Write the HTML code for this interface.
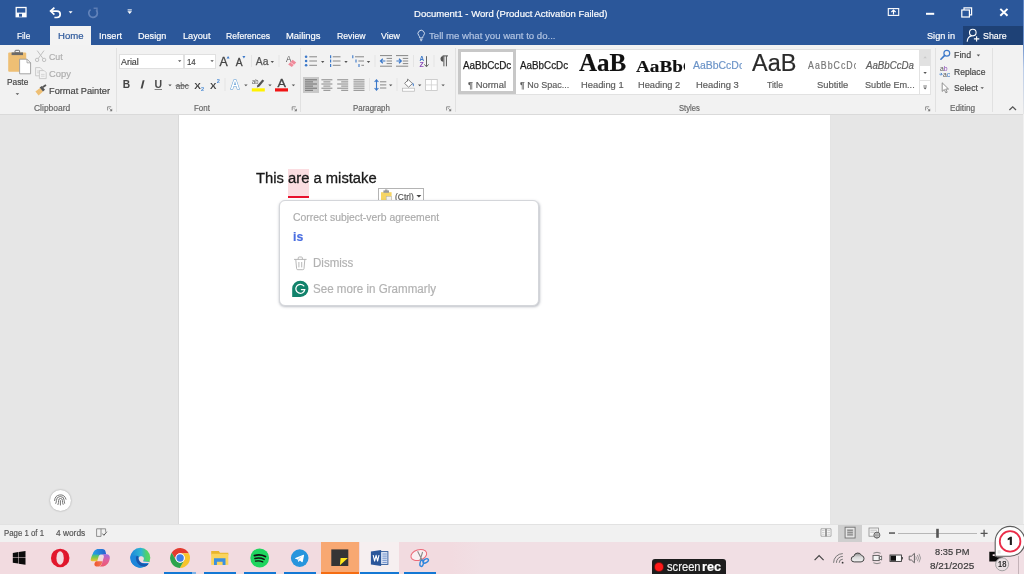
<!DOCTYPE html>
<html><head><meta charset="utf-8"><title>Document1 - Word</title>
<style>
html,body{margin:0;padding:0;}
body{width:1024px;height:574px;overflow:hidden;position:relative;background:#e6e6e6;font-family:'Liberation Sans', sans-serif;}
.b{position:absolute;}
.t{position:absolute;-webkit-text-stroke-width:0.18px;line-height:0;white-space:pre;transform-origin:0 0;font-family:'Liberation Sans', sans-serif;}
svg{position:absolute;overflow:visible;}
#root{position:absolute;left:0;top:0;width:1024px;height:574px;overflow:hidden;will-change:transform;}

</style></head><body><div id="root">
<!-- title bar + tab row -->
<div class="b" style="left:0;top:0;width:1024px;height:45px;background:#2b579a"></div>
<div class="b" style="left:50px;top:26px;width:40.5px;height:19px;background:#f3f3f3"></div>
<div class="b" style="left:963px;top:26px;width:61px;height:19px;background:#1e4176"></div>
<!-- ribbon -->
<div class="b" style="left:0;top:45px;width:1024px;height:69.4px;background:#f2f2f2"></div>
<div class="b" style="left:0;top:114px;width:1024px;height:1px;background:#dadada"></div>
<!-- page -->
<div class="b" style="left:178.1px;top:115.2px;width:652.8px;height:409px;background:#d9d9d9"></div>
<div class="b" style="left:179px;top:115.2px;width:650.6px;height:409px;background:#fff;box-shadow:0.5px 0 0 #f0f0f0"></div>
<!-- status bar -->
<div class="b" style="left:0;top:524px;width:1024px;height:18px;background:#f1f1f1"></div>
<!-- taskbar -->
<div class="b" style="left:0;top:542px;width:1024px;height:32px;background:linear-gradient(90deg,#f2dbe0 0,#f2dbe0 44%,#f1dfe4 47%,#f1dfe4 100%)"></div>

<!-- title bar icons -->
<svg style="left:0;top:0" width="1024" height="46" viewBox="0 0 1024 46">
 <!-- save -->
 <g fill="none" stroke="#fff" stroke-width="1.3">
  <rect x="16.2" y="7.5" width="9.8" height="9.2"/>
 </g>
 <rect x="16.2" y="12.6" width="9.8" height="4.1" fill="#fff"/>
 <rect x="19" y="13.8" width="3" height="2.9" fill="#2b579a"/>
 <!-- undo -->
 <path d="M51.3 11.1 H57 A3.2 3.2 0 0 1 57 17.5 H54.4" fill="none" stroke="#fff" stroke-width="1.7" stroke-linecap="butt"/>
 <path d="M54.4 7.6 L50.6 11.1 L54.4 14.6" fill="none" stroke="#fff" stroke-width="1.7"/>
 <path d="M68.6 11.2 h4 l-2 2.2z" fill="#fff"/>
 <!-- redo dim -->
 <path d="M96.2 10.2 A4.3 4.3 0 1 1 90.6 9.6" fill="none" stroke="#6283ba" stroke-width="1.7"/>
 <path d="M93.6 8.2 h3.4 v3.4" fill="none" stroke="#5b7cb4" stroke-width="1.4"/>
 <!-- qat -->
 <rect x="127.6" y="9.4" width="4.2" height="1" fill="#fff"/>
 <path d="M127.4 11.3 h4.6 l-2.3 2.6z" fill="#fff"/>
 <!-- ribbon display -->
 <rect x="888.3" y="8.6" width="10.4" height="6.8" fill="none" stroke="#fff" stroke-width="1.1"/>
 <path d="M893.5 14.4 v-3.6 M891.3 12.2 l2.2 -2.2 l2.2 2.2" fill="none" stroke="#fff" stroke-width="1.2"/>
 <!-- minimize -->
 <rect x="926" y="12.8" width="8.2" height="2" fill="#fff"/>
 <!-- restore -->
 <rect x="961.8" y="10" width="7.6" height="7" fill="none" stroke="#fff" stroke-width="1.2"/>
 <path d="M964 10 v-2.2 h7.6 v7 h-2.2" fill="none" stroke="#fff" stroke-width="1.2"/>
 <!-- close -->
 <path d="M1000.3 8.9 l7.2 6.9 M1007.5 8.9 l-7.2 6.9" stroke="#fff" stroke-width="2" fill="none"/>
 <!-- share person -->
 <circle cx="972.8" cy="32.6" r="3.3" fill="none" stroke="#fff" stroke-width="1.1"/>
 <path d="M967.2 41.8 c0.2 -3.4 2 -5.6 4.6 -5.9" fill="none" stroke="#fff" stroke-width="1.1"/>
 <path d="M976.6 36.2 v5.4 M973.9 38.9 h5.4" fill="none" stroke="#fff" stroke-width="1.1"/>
 <!-- lightbulb -->
 <path d="M418.800 35.600 a3.200 3.200 0 1 1 4.800 0 c-0.700 0.800 -0.900 1.300 -0.900 2.300 h-3 c0 -1 -0.200 -1.500 -0.900 -2.300z" fill="none" stroke="#d6e0f1" stroke-width="0.950"/>
 <path d="M419.900 39.300 h2.600 M420.300 40.700 h1.800" stroke="#d6e0f1" stroke-width="0.950"/>
</svg>

<!-- clipboard group icons -->
<svg style="left:0;top:44px" width="120" height="72" viewBox="0 44 120 72">
 <!-- paste: board -->
 <rect x="8.2" y="52.6" width="18" height="19.2" rx="1" fill="#eebf74"/>
 <rect x="11.600" y="52.400" width="11.400" height="2.700" fill="#6a6a6a"/>
 <rect x="15" y="50.300" width="4.600" height="2.600" rx="0.800" fill="none" stroke="#6a6a6a" stroke-width="1"/>
 <!-- paper -->
 <path d="M19.6 59.2 h7.4 l3.6 3.6 v11 h-11z" fill="#fff" stroke="#9a9a9a" stroke-width="0.9"/>
 <path d="M27 59.2 v3.6 h3.6" fill="none" stroke="#9a9a9a" stroke-width="0.8"/>
 <path d="M15.6 93.2 h3.6 l-1.8 1.9z" fill="#555"/>
 <!-- cut (disabled) -->
 <g fill="none" stroke="#c0c0c0" stroke-width="1">
  <path d="M37.2 50.6 l6 8.2 M44 50.6 l-6 8.2"/>
  <circle cx="37.1" cy="59.9" r="1.7"/><circle cx="44.1" cy="59.9" r="1.7"/>
 </g>
 <!-- copy (disabled) -->
 <g fill="#f3f3f3" stroke="#c4c4c4" stroke-width="0.85">
  <path d="M35.6 67.6 h4.6 l2 2 v6.2 h-6.6z"/>
  <path d="M39.4 70.6 h4.8 l2 2 v6 h-6.8z"/>
 </g>
 <path d="M37 71 h3 M37 72.8 h2 M41 74.4 h3.6 M41 76.2 h3.6" stroke="#c8c8c8" stroke-width="0.7"/>
 <!-- format painter -->
 <path d="M35.4 91.4 l4.6 -3.4 l3 3.6 l-4.4 3.8z" fill="#eebf74"/>
 <path d="M39.6 87.6 l2.2 -1.6 l3.2 3.8 l-2 1.8z" fill="#555"/>
 <path d="M42.6 87.2 l3.4 -2.2" stroke="#555" stroke-width="1.8"/>
 <!-- launcher -->
 <path d="M107.6 110.4 v-3.6 h3.6" fill="none" stroke="#777" stroke-width="0.8"/>
 <path d="M112.2 108.6 v2.6 h-2.6z" fill="#777"/>
 <path d="M109.2 108.2 l2 2" stroke="#777" stroke-width="0.7"/>
</svg>

<!-- group separators -->
<div class="b" style="left:116px;top:48px;width:1px;height:64px;background:#e1e1e1"></div>
<div class="b" style="left:300px;top:48px;width:1px;height:64px;background:#e1e1e1"></div>
<div class="b" style="left:454.5px;top:48px;width:1px;height:64px;background:#e1e1e1"></div>
<div class="b" style="left:934.5px;top:48px;width:1px;height:64px;background:#e1e1e1"></div>
<div class="b" style="left:991.5px;top:48px;width:1px;height:64px;background:#e1e1e1"></div>
<!-- font name / size boxes -->
<div class="b" style="left:119px;top:53.5px;width:65px;height:15.5px;background:#fff;border:1px solid #e0e0e0;box-sizing:border-box"></div>
<div class="b" style="left:184px;top:53.5px;width:32.3px;height:15.5px;background:#fff;border:1px solid #e0e0e0;box-sizing:border-box"></div>
<svg style="left:114px;top:46px" width="190" height="70" viewBox="114 46 190 70" font-family="'Liberation Sans', sans-serif">
 <path d="M178 60.2 h3.4 l-1.7 1.9z M210.4 60.2 h3.4 l-1.7 1.9z" fill="#555"/>
 <!-- grow / shrink -->
 <text x="219.600" y="66.100" font-size="12" fill="#444" stroke="#444" stroke-width="0.300" textLength="8.200" lengthAdjust="spacingAndGlyphs">A</text>
 <path d="M226.6 58.4 l1.5 -2.4 l1.5 2.4z" fill="#3b78c9"/>
 <text x="235.800" y="66.100" font-size="10" fill="#444" stroke="#444" stroke-width="0.300" textLength="6.800" lengthAdjust="spacingAndGlyphs">A</text>
 <path d="M242.4 56.1 h3 l-1.5 2.4z" fill="#3b78c9"/>
 <rect x="251" y="55" width="1" height="12" fill="#e4e4e4"/>
 <!-- Aa -->
 <text x="255.800" y="64.700" font-size="10" fill="#555" stroke="#555" stroke-width="0.250" textLength="12.600" lengthAdjust="spacingAndGlyphs">Aa</text>
 <path d="M270.6 61 h3.4 l-1.7 1.9z" fill="#555"/>
 <rect x="278.5" y="55" width="1" height="12" fill="#e4e4e4"/>
 <!-- clear formatting -->
 <text x="286" y="62.4" font-size="8.5" fill="#555" textLength="5.4" lengthAdjust="spacingAndGlyphs">A</text>
 <path d="M292.6 59.8 l3.6 2.6 l-4.4 4.6 l-3.6 -2.6z" fill="#f08a9a"/>
 <path d="M290.4 62.2 l3.6 2.6" stroke="#fbd3d9" stroke-width="0.8"/>
 <!-- B I U -->
 <text x="122.7" y="88.4" font-size="10.8" font-weight="700" fill="#444" textLength="7.4" lengthAdjust="spacingAndGlyphs">B</text>
 <path d="M140.600 88.400 L142.700 80.300 h1.900 L142.500 88.400z" fill="#444"/>
 <text x="154.500" y="88.400" font-size="10.800" font-weight="700" fill="#4a4a4a" textLength="7.600" lengthAdjust="spacingAndGlyphs">U</text>
 <rect x="154.600" y="89.200" width="7.400" height="0.800" fill="#666"/>
 <path d="M168.3 84.4 h3.4 l-1.7 1.9z" fill="#555"/>
 <!-- abc strike -->
 <text x="175.8" y="88.6" font-size="9" fill="#555" textLength="13" lengthAdjust="spacingAndGlyphs">abc</text>
 <rect x="175.4" y="85.4" width="13.8" height="0.8" fill="#555"/>
 <!-- X2 sub / sup -->
 <text x="194.2" y="89" font-size="9.6" font-weight="700" fill="#444" textLength="6.6" lengthAdjust="spacingAndGlyphs">X</text>
 <text x="201" y="91" font-size="5.600" font-weight="700" fill="#4a8ad4">2</text>
 <text x="210.1" y="89" font-size="9.6" font-weight="700" fill="#444" textLength="6.4" lengthAdjust="spacingAndGlyphs">X</text>
 <text x="216.700" y="82.900" font-size="5.600" font-weight="700" fill="#4a8ad4">2</text>
 <rect x="224.5" y="78" width="1" height="13" fill="#e4e4e4"/>
 <!-- text effects A -->
 <text x="230.6" y="89.2" font-size="12.5" font-weight="700" fill="#fff" stroke="#5b9bd5" stroke-width="1" textLength="9" lengthAdjust="spacingAndGlyphs" paint-order="stroke">A</text>
 <path d="M244.2 84.4 h3.4 l-1.7 1.9z" fill="#555"/>
 <!-- highlighter -->
 <text x="252" y="83.6" font-size="6.5" fill="#555" textLength="6.4" lengthAdjust="spacingAndGlyphs">ab</text>
 <path d="M262.4 79.4 l1.8 1.4 l-5 6 l-2.4 0.8 l0.6 -2.4z" fill="#555"/>
 <rect x="251.8" y="88.3" width="13" height="3.2" fill="#fff200"/>
 <path d="M268.3 84.4 h3.4 l-1.7 1.9z" fill="#555"/>
 <!-- font color -->
 <text x="277.500" y="87.300" font-size="11" fill="#444" stroke="#444" stroke-width="0.300" textLength="8.400" lengthAdjust="spacingAndGlyphs">A</text>
 <rect x="275" y="88.3" width="13" height="3.2" fill="#f01414"/>
 <path d="M291.7 84.4 h3.4 l-1.7 1.9z" fill="#555"/>
 <!-- launcher -->
 <path d="M292.2 110.4 v-3.6 h3.6" fill="none" stroke="#777" stroke-width="0.8"/>
 <path d="M296.8 108.6 v2.6 h-2.6z" fill="#777"/>
 <path d="M293.8 108.2 l2 2" stroke="#777" stroke-width="0.7"/>
</svg>

<!-- paragraph group -->
<div class="b" style="left:303.2px;top:77.2px;width:15.6px;height:15.7px;background:#c8c8c8"></div>
<svg style="left:298px;top:46px" width="160" height="70" viewBox="298 46 160 70" font-family="'Liberation Sans', sans-serif">
 <!-- bullets -->
 <g fill="#3b78c9"><circle cx="306.1" cy="56.8" r="1.3"/><circle cx="306.1" cy="61" r="1.3"/><circle cx="306.1" cy="65.3" r="1.3"/></g>
 <path d="M309.3 56.8 h7.7 M309.3 61 h7.7 M309.3 65.3 h7.7" stroke="#7a7a7a" stroke-width="0.9"/>
 <path d="M321 61 h3.4 l-1.7 1.9z" fill="#555"/>
 <!-- numbering -->
 <path d="M330.6 55.2 v3 M330.6 59.6 v3 M330.6 64 v3" stroke="#3b78c9" stroke-width="1.2"/>
 <path d="M332.8 56.8 h7.7 M332.8 61 h7.7 M332.8 65.3 h7.7" stroke="#7a7a7a" stroke-width="0.9"/>
 <path d="M344.3 61 h3.4 l-1.7 1.9z" fill="#555"/>
 <!-- multilevel -->
 <path d="M352.8 55.2 v3 M356 59.6 v3 M359 64 v3" stroke="#3b78c9" stroke-width="1.1"/>
 <path d="M355 56.8 h9 M358.4 61 h5.6 M361.4 65.3 h2.6" stroke="#7a7a7a" stroke-width="0.9"/>
 <path d="M366.8 61 h3.4 l-1.7 1.9z" fill="#555"/>
 <rect x="374.5" y="55" width="1" height="12" fill="#e4e4e4"/>
 <!-- decrease indent -->
 <path d="M380 55.6 h12 M386.6 58.4 h5.4 M386.6 61 h5.4 M386.6 63.6 h5.4 M380 66.2 h12" stroke="#7a7a7a" stroke-width="0.9"/>
 <path d="M385.4 61 h-4.6 M382.8 58.8 l-2.3 2.2 l2.3 2.2" stroke="#3b78c9" stroke-width="1.2" fill="none"/>
 <!-- increase indent -->
 <path d="M396 55.6 h12.2 M402.8 58.4 h5.4 M402.8 61 h5.4 M402.8 63.6 h5.4 M396 66.2 h12.2" stroke="#7a7a7a" stroke-width="0.9"/>
 <path d="M396.4 61 h4.8 M399 58.8 l2.3 2.2 l-2.3 2.2" stroke="#3b78c9" stroke-width="1.2" fill="none"/>
 <rect x="413" y="55" width="1" height="12" fill="#e4e4e4"/>
 <!-- sort -->
 <text x="419.4" y="60.9" font-size="7" font-weight="700" fill="#3b78c9" textLength="4.6" lengthAdjust="spacingAndGlyphs">A</text>
 <text x="419.6" y="66.9" font-size="7" font-weight="700" fill="#8a4bb8" textLength="4.2" lengthAdjust="spacingAndGlyphs">Z</text>
 <path d="M426.5 56.2 v10 M424.4 64.4 l2.1 2.4 l2.1 -2.4" stroke="#555" stroke-width="0.9" fill="none"/>
 <rect x="433.5" y="55" width="1" height="12" fill="#e4e4e4"/>
 <!-- pilcrow -->
 <path d="M443.4 55.9 a2.9 2.9 0 0 0 0 5.8 z" fill="#555"/>
 <path d="M443.9 55.9 v10.4 M446.4 55.9 v10.4 M442.6 55.9 h5.4" stroke="#555" stroke-width="1" fill="none"/>
 <!-- align left (selected) -->
 <path d="M305 79.8 h12 M305 81.9 h8 M305 84 h12 M305 86.1 h8 M305 88.2 h12 M305 90.3 h8" stroke="#666" stroke-width="0.9"/>
 <!-- center -->
 <path d="M321.4 79.8 h11 M323.4 81.9 h7 M321.4 84 h11 M323.4 86.1 h7 M321.4 88.2 h11 M323.4 90.3 h7" stroke="#7a7a7a" stroke-width="0.9"/>
 <!-- right -->
 <path d="M337.2 79.8 h11 M341.2 81.9 h7 M337.2 84 h11 M341.2 86.1 h7 M337.2 88.2 h11 M341.2 90.3 h7" stroke="#7a7a7a" stroke-width="0.9"/>
 <!-- justify -->
 <path d="M353.5 79.8 h11 M353.5 81.9 h11 M353.5 84 h11 M353.5 86.1 h11 M353.5 88.2 h11 M353.5 90.3 h11" stroke="#7a7a7a" stroke-width="0.9"/>
 <rect x="369" y="78" width="1" height="13" fill="#e4e4e4"/>
 <!-- line spacing -->
 <path d="M376.5 80 v10 M374.6 82 l1.9 -2.2 l1.9 2.2 M374.6 88 l1.9 2.2 l1.9 -2.2" stroke="#3b78c9" stroke-width="1.1" fill="none"/>
 <path d="M380 81.8 h6.3 M380 84.9 h6.3 M380 88 h6.3" stroke="#7a7a7a" stroke-width="0.9"/>
 <path d="M389 84.4 h3.4 l-1.7 1.9z" fill="#555"/>
 <rect x="396.5" y="78" width="1" height="13" fill="#e4e4e4"/>
 <!-- shading -->
 <path d="M404.6 83.4 l3.8 -3.8 l4 4 l-3.8 3.6z" fill="#fff" stroke="#666" stroke-width="0.8"/>
 <path d="M407.6 81.4 v-2.6" stroke="#666" stroke-width="0.8"/>
 <path d="M412.6 82.6 c1.4 1.2 1.6 2.6 1 3.8 c-0.8 -0.4 -1.2 -1.6 -1 -3.8z" fill="#3b78c9"/>
 <rect x="402.4" y="88.2" width="12.2" height="3" fill="#fff" stroke="#b5b5b5" stroke-width="0.7"/>
 <path d="M418 84.4 h3.4 l-1.7 1.9z" fill="#555"/>
 <!-- borders -->
 <rect x="425.6" y="79.4" width="11.6" height="11" fill="#fff" stroke="#c4c4c4" stroke-width="0.8"/>
 <path d="M431.4 79.4 v11 M425.6 84.9 h11.6" stroke="#cfcfcf" stroke-width="0.8"/>
 <path d="M441.4 84.4 h3.4 l-1.7 1.9z" fill="#555"/>
 <!-- launcher -->
 <path d="M446.6 110.4 v-3.6 h3.6" fill="none" stroke="#777" stroke-width="0.8"/>
 <path d="M451.2 108.6 v2.6 h-2.6z" fill="#777"/>
 <path d="M448.2 108.2 l2 2" stroke="#777" stroke-width="0.7"/>
</svg>

<!-- styles gallery -->
<div class="b" style="left:458px;top:49px;width:472.5px;height:46px;background:#fff;border:1px solid #e2e2e2;box-sizing:border-box"></div>
<div class="b" style="left:458px;top:48.500px;width:58px;height:45.600px;border:3px solid #c8c8c8;box-sizing:border-box;background:#fff"></div>
<!-- gallery scroll column -->
<div class="b" style="left:919px;top:49.5px;width:11.2px;height:15.4px;background:#e1e1e1"></div>
<div class="b" style="left:919px;top:49.5px;width:1px;height:45.5px;background:#e2e2e2"></div>
<div class="b" style="left:919px;top:64.9px;width:11.2px;height:1px;background:#e2e2e2"></div>
<div class="b" style="left:919px;top:80px;width:11.2px;height:1px;background:#e2e2e2"></div>
<svg style="left:916px;top:46px" width="20" height="70" viewBox="916 46 20 70">
 <path d="M923.4 58.2 h3.4 l-1.7 -1.9z" fill="#c9c9c9"/>
 <path d="M923.4 72 h3.4 l-1.7 1.9z" fill="#555"/>
 <path d="M923.3 86 h3.6" stroke="#555" stroke-width="0.8"/>
 <path d="M923.4 87.6 h3.4 l-1.7 1.9z" fill="#555"/>
 <path d="M925.6 110.4 v-3.6 h3.6" fill="none" stroke="#777" stroke-width="0.8"/>
 <path d="M930.2 108.6 v2.6 h-2.6z" fill="#777"/>
 <path d="M927.2 108.2 l2 2" stroke="#777" stroke-width="0.7"/>
</svg>

<!-- editing group -->
<svg style="left:934px;top:46px" width="90" height="70" viewBox="934 46 90 70" font-family="'Liberation Sans', sans-serif">
 <circle cx="946.8" cy="53.2" r="2.9" fill="none" stroke="#3b78c9" stroke-width="1.2"/>
 <path d="M944.7 55.4 l-3.8 3.8" stroke="#3b78c9" stroke-width="1.6" stroke-linecap="round"/>
 <path d="M976.7 54.6 h3.4 l-1.7 1.9z" fill="#555"/>
 <!-- replace -->
 <text x="940" y="71" font-size="6.8" fill="#555">a</text>
 <text x="943.8" y="71" font-size="6.8" fill="#8a4bb8">b</text>
 <text x="943" y="77" font-size="6.8" fill="#555">a</text>
 <text x="946.8" y="77" font-size="6.8" fill="#3b78c9">c</text>
 <path d="M939.4 74.2 h2.6 M940.9 72.9 l1.3 1.3 l-1.3 1.3" stroke="#3b78c9" stroke-width="0.8" fill="none"/>
 <!-- select cursor -->
 <path d="M942.2 82.8 v8.6 l2.1 -1.9 l1.5 3.3 l1.4 -0.6 l-1.5 -3.2 h2.8z" fill="#fff" stroke="#777" stroke-width="0.8" stroke-linejoin="round"/>
 <path d="M980.5 87.2 h3.4 l-1.7 1.9z" fill="#555"/>
 <!-- collapse chevron -->
 <path d="M1009.4 110 l3.3 -3.1 l3.3 3.1" fill="none" stroke="#555" stroke-width="1.3"/>
</svg>
<!-- right edge sliver -->
<div class="b" style="left:1022.5px;top:0;width:1.5px;height:114px;background:linear-gradient(#5f86c4 0,#6f93cc 40%,#b9cbe8 60%,#e6e6e6 100%)"></div>
<div class="b" style="left:1022.5px;top:114px;width:1.5px;height:428px;background:#f0f0f0"></div>

<!-- document content -->
<div class="b" style="left:287.8px;top:169.4px;width:21px;height:26.8px;background:#fbdde1"></div>
<div class="b" style="left:287.8px;top:195.9px;width:21px;height:2.1px;background:#e8112d"></div>
<!-- paste options (Ctrl) button -->
<div class="b" style="left:378.2px;top:188.1px;width:45.8px;height:14px;background:#fff;border:1px solid #b4b4b4;box-sizing:border-box"></div>
<svg style="left:378px;top:188px" width="48" height="14" viewBox="378 188 48 14">
 <rect x="381" y="192.200" width="10.600" height="9" fill="#f6d565"/>
 <rect x="383.400" y="190.400" width="5.600" height="2.400" fill="#9a9a9a"/>
 <rect x="385" y="189.500" width="2.400" height="1.300" fill="#9a9a9a"/>
 <rect x="386.200" y="196.400" width="5.200" height="5" fill="#f2f2f2" stroke="#b0b0b0" stroke-width="0.500"/>
 <path d="M416.4 195.1 h5 l-2.5 2.5z" fill="#444"/>
</svg>
<!-- grammarly popup -->
<div class="b" style="left:278.7px;top:199.5px;width:260px;height:106.6px;background:#fff;border:1px solid #d4d6da;border-radius:6px;box-sizing:border-box;box-shadow:0.5px 1px 2.5px rgba(60,70,90,0.35)"></div>
<svg style="left:290px;top:252px" width="24" height="50" viewBox="290 252 24 50">
 <!-- trash -->
 <g fill="none" stroke="#b4b4b4" stroke-width="0.95" stroke-linecap="round" stroke-linejoin="round">
  <path d="M294.4 259.4 h11.8"/>
  <path d="M298.2 259.2 v-1.2 a1 1 0 0 1 1 -1 h2.2 a1 1 0 0 1 1 1 v1.2"/>
  <path d="M295.8 259.6 l0.8 9 a1.2 1.2 0 0 0 1.2 1.1 h5 a1.2 1.2 0 0 0 1.2 -1.1 l0.8 -9"/>
  <path d="M298.9 262.4 v4.6 M301.7 262.4 v4.6"/>
 </g>
 <!-- grammarly G -->
 <path d="M300.300 280.700 a8.100 8.100 0 1 1 0 16.200 h-8.100 v-8.100 a8.100 8.100 0 0 1 8.100 -8.100z" fill="#11826b"/>
 <path d="M303.800 285.900 a4.500 4.500 0 1 0 1 3.600 h-3.400" fill="none" stroke="#fff" stroke-width="1.250" stroke-linecap="round"/>
</svg>

<!-- fingerprint floating button -->
<div class="b" style="left:49.6px;top:489.8px;width:21.4px;height:21.4px;border-radius:50%;background:#fff;box-shadow:0 0 2px rgba(0,0,0,0.35)"></div>
<svg style="left:50px;top:490px" width="22" height="22" viewBox="50 490 22 22">
 <g fill="none" stroke="#777" stroke-width="1" stroke-linecap="round">
  <path d="M54.6 500.6 a5.8 5.8 0 0 1 11.4 -1.4"/>
  <path d="M55.8 503.4 c0.5 -1 0.6 -2 0.6 -3 a3.9 3.9 0 0 1 7.8 0 c0 1 0.1 2 0.4 2.9"/>
  <path d="M58 504.6 c0.5 -1.4 0.6 -2.8 0.6 -4.2 a1.9 1.9 0 0 1 3.8 0 c0 1.6 0.2 3 0.7 4"/>
  <path d="M60.4 500.6 v4.4"/>
 </g>
</svg>
<!-- status bar icons -->
<div class="b" style="left:0;top:524px;width:1024px;height:1px;background:#e2e2e2"></div>
<div class="b" style="left:838.3px;top:525px;width:23.7px;height:17px;background:#cfcfcf"></div>
<svg style="left:0;top:524px" width="1024" height="18" viewBox="0 524 1024 18">
 <!-- proofing book -->
 <path d="M96.6 528.8 h4.4 v7.6 h-4.4z M101 528.8 h4.6 v3" fill="none" stroke="#777" stroke-width="0.8"/>
 <path d="M102.4 533.6 l1.5 1.7 l2.9 -3.6" fill="none" stroke="#555" stroke-width="1"/>
 <!-- read mode -->
 <path d="M821 528.8 h4.6 v7.4 h-4.6z M826.4 528.8 h4.6 v7.4 h-4.6z" fill="#fff" stroke="#8a8a8a" stroke-width="0.7"/>
 <path d="M822 530.6 h2.6 M822 532.4 h2.6 M822 534.2 h2.6 M827.4 530.6 h2.6 M827.4 532.4 h2.6 M827.4 534.2 h2.6" stroke="#aaa" stroke-width="0.6"/>
 <path d="M826 528.4 v8.6" stroke="#777" stroke-width="0.7"/>
 <!-- print layout -->
 <rect x="845.100" y="527.200" width="10" height="10.800" fill="#e9e9e9" stroke="#6f6f6f" stroke-width="0.900"/>
 <rect x="846.900" y="529" width="6.400" height="7.200" fill="#bdbdbd"/>
 <path d="M847.400 530.400 h5.400 M847.400 532.600 h5.400 M847.400 534.800 h5.400" stroke="#7d7d7d" stroke-width="0.800"/>
 <!-- web layout -->
 <rect x="869" y="528" width="9.600" height="8.200" fill="#f6f6f6" stroke="#888" stroke-width="0.800"/>
 <path d="M870.400 530.200 h6.600 M870.400 532.200 h4" stroke="#aaa" stroke-width="0.700"/>
 <circle cx="876.900" cy="535.100" r="3" fill="#f1f1f1" stroke="#555" stroke-width="0.900"/>
 <path d="M873.900 535.100 h6 M876.900 532.100 v6" stroke="#666" stroke-width="0.500"/>
 <ellipse cx="876.900" cy="535.100" rx="1.300" ry="3" fill="none" stroke="#666" stroke-width="0.500"/>
 <!-- zoom slider -->
 <rect x="889" y="532.300" width="6" height="1.500" fill="#555"/>
 <rect x="898" y="533" width="79" height="0.8" fill="#a9a9a9"/>
 <rect x="936.2" y="528.8" width="2.6" height="9" fill="#555"/>
 <path d="M980.6 533.3 h7 M984.1 529.8 v7" stroke="#555" stroke-width="1.3"/>
</svg>

<!-- taskbar highlights + running indicators -->
<div class="b" style="left:320.6px;top:542px;width:38.7px;height:32px;background:#f8a872"></div>
<div class="b" style="left:320.6px;top:572px;width:38.7px;height:2px;background:#f56d12"></div>
<div class="b" style="left:360.4px;top:542px;width:38.8px;height:32px;background:#f6eff0"></div>
<div class="b" style="left:360.4px;top:572px;width:38.8px;height:2px;background:#1478d4"></div>
<div class="b" style="left:164px;top:572px;width:28px;height:2px;background:#1478d4"></div>
<div class="b" style="left:192px;top:572px;width:4.3px;height:2px;background:#7fb2e6"></div>
<div class="b" style="left:204px;top:572px;width:32.3px;height:2px;background:#1478d4"></div>
<div class="b" style="left:244px;top:572px;width:32.4px;height:2px;background:#1478d4"></div>
<div class="b" style="left:283.8px;top:572px;width:32.4px;height:2px;background:#1478d4"></div>
<div class="b" style="left:403.9px;top:572px;width:32.3px;height:2px;background:#1478d4"></div>
<svg style="left:0;top:542px" width="470" height="32" viewBox="0 542 470 32">
 <!-- windows -->
 <path d="M12.800 552.900 l5.400 -0.800 v5.500 h-5.400z M18.700 552 l6.800 -1 v6.600 h-6.800z M12.800 558.100 h5.400 v5.500 l-5.400 -0.800z M18.700 558.100 h6.800 v6.600 l-6.800 -1z" fill="#0c0c0c"/>
 <!-- opera -->
 <circle cx="60.200" cy="557.900" r="9.250" fill="#e2182d"/>
 <path d="M62.500 550 a8.600 8.600 0 0 1 0 15.800 a9 9 0 0 0 0 -15.800z" fill="#b50f22" opacity="0.500"/>
 <ellipse cx="60.100" cy="558" rx="3.700" ry="6.700" fill="#f2dbe0"/>
 <!-- copilot -->
 <defs>
  <linearGradient id="cpB" x1="0" y1="0" x2="1" y2="0"><stop offset="0" stop-color="#27a4e6"/><stop offset="1" stop-color="#2560cf"/></linearGradient>
  <linearGradient id="cpL" x1="0" y1="0" x2="0" y2="1"><stop offset="0" stop-color="#35b8a0"/><stop offset="0.45" stop-color="#7fc84a"/><stop offset="1" stop-color="#f2c22e"/></linearGradient>
  <linearGradient id="cpR" x1="0" y1="0" x2="0" y2="1"><stop offset="0" stop-color="#a06be0"/><stop offset="0.5" stop-color="#e0609a"/><stop offset="1" stop-color="#f0566a"/></linearGradient>
  <linearGradient id="cpO" x1="0" y1="0" x2="1" y2="0"><stop offset="0" stop-color="#f0542c"/><stop offset="1" stop-color="#f07a5a"/></linearGradient>
  <linearGradient id="edT" x1="0" y1="0" x2="1" y2="0"><stop offset="0" stop-color="#1e86da"/><stop offset="0.55" stop-color="#2fb6d2"/><stop offset="0.8" stop-color="#4fd06c"/><stop offset="1" stop-color="#56d764"/></linearGradient>
 </defs>
 <path d="M92.6 554.6 c0.800 -3.200 2.600 -5.600 5.800 -5.600 h3.800 c2 0 3 1 3.400 2.800 l0.600 2.600 h-4.400 c-1.600 0 -2.400 0.400 -3 1.600 h-6.600z" fill="url(#cpB)"/>
 <path d="M92.400 554.400 h6.800 l-2 6.800 h-5.200 c-1 0 -1.400 -0.800 -1.200 -2 c0.200 -1.600 0.800 -3.200 1.600 -4.800z" fill="url(#cpL)"/>
 <path d="M96 561.200 h6.600 l-0.800 2.200 c-0.800 2 -2.200 3.200 -4.600 3.200 c-1.600 0 -2.600 -0.600 -2.800 -2 c-0.100 -1.200 0.600 -2.400 1.600 -3.400z" fill="url(#cpO)"/>
 <path d="M101.800 554.200 h4.600 c2.600 0 3.800 1.800 3.400 4.200 c-0.400 2.400 -1.400 4.600 -3 6.200 c-1.400 1.400 -3 2 -5 2 h-3.400 c2 -0.400 3 -1.400 3.600 -3.400 l1.800 -6 c0.400 -1.400 -0.200 -2.400 -2 -3z" fill="url(#cpR)"/>
 <!-- edge -->
 <circle cx="140.300" cy="557.700" r="10" fill="url(#edT)"/>
 <path d="M130.300 557.700 A10 10 0 0 0 149.400 561.800 L143.800 561.200 C140 561 137.600 558.600 137.400 555.600 L130.600 555.400z" fill="#1e86da"/>
 <path d="M136 556.800 C135.400 562 139 566.600 144 566.600 C146.200 566.600 147.800 565.400 148.800 563.400 C146.200 564.600 143 564.200 141 562.600 C139 561 138.200 558.600 138.600 556.400 C137.800 555.800 136.600 556 136 556.800z" fill="#1757ae"/>
 <path d="M138.800 557.600 c0.500 -1.200 1.900 -1.700 3.100 -1.300 c1.400 0.500 2.100 1.600 2 2.600 c-0.100 0.800 -0.700 1.300 -0.700 2.100 c0 0.200 0.100 0.400 0.200 0.500 l6.200 0.400 l-0.400 1.100 l-5.400 -0.100 c-1.400 0 -2.800 -0.500 -3.800 -1.500 c-1.100 -1 -1.600 -2.500 -1.200 -3.800z" fill="#f2dbe0"/>
 <!-- chrome -->
 <path d="M171.673 552.804 A9.9 9.9 0 0 1 188.813 553.300 L180.100 553.300 A4.7 4.7 0 0 0 176.030 560.350 Z" fill="#e33b2e"/>
 <path d="M188.813 553.300 A9.9 9.9 0 0 1 179.814 567.896 L184.170 560.350 A4.7 4.7 0 0 0 180.100 553.300 Z" fill="#f7c42c"/>
 <path d="M179.814 567.896 A9.9 9.9 0 0 1 171.673 552.804 L176.030 560.350 A4.7 4.7 0 0 0 184.170 560.350 Z" fill="#2da44e"/>
 <circle cx="180.1" cy="558.0" r="4.7" fill="#fff"/>
 <circle cx="180.1" cy="558.0" r="3.700" fill="#3f7fe8"/>
 <!-- explorer -->
 <path d="M211.200 551 h7.600 l1.200 1.800 h8.300 v2.400 h-17.100z" fill="#e9b62e"/>
 <path d="M211.200 553.800 h17.100 v11.100 h-17.100z" fill="#fad45c"/>
 <path d="M214 558.200 h11.500 v6.700 h-2.900 v-3.200 h-5.700 v3.200 h-2.900z" fill="#3b8fe0"/>
 <!-- spotify -->
 <circle cx="259.700" cy="558" r="9.400" fill="#1fd55f"/>
 <g fill="none" stroke="#111" stroke-linecap="round">
  <path d="M254.400 555.600 c3.800 -1.100 7.800 -0.700 11 0.900" stroke-width="1.700"/>
  <path d="M254.900 558.500 c3.200 -0.900 6.500 -0.500 9.300 0.900" stroke-width="1.450"/>
  <path d="M255.400 561.200 c2.600 -0.700 5.200 -0.400 7.400 0.700" stroke-width="1.200"/>
 </g>
 <!-- telegram -->
 <circle cx="299.700" cy="558.100" r="8.800" fill="#2795dd"/>
 <g transform="translate(299.700 558.300) scale(0.800) translate(-299.700 -558.300)">
 <path d="M294.200 558 l10.200 -4.200 c0.500 -0.200 0.900 0.100 0.800 0.700 l-1.700 8.200 c-0.100 0.600 -0.600 0.700 -1 0.400 l-2.600 -1.900 l-1.400 1.400 c-0.300 0.300 -0.600 0.200 -0.700 -0.200 l-0.600 -2.600 l-2.900 -0.900 c-0.600 -0.200 -0.600 -0.700 -0.100 -0.900z" fill="#fff"/>
 <path d="M297.200 558.900 l5.600 -3.600 l-4.200 4.400 l-0.400 2.400z" fill="#b9dcf2"/>
 </g>
 <!-- sticky notes -->
 <rect x="331.300" y="549.400" width="17" height="16.600" fill="#353535"/>
 <path d="M340.600 558.100 h7.300 l-8 7.200z" fill="#ffe71a"/>
 <!-- word -->
 <rect x="379.500" y="551.600" width="8.400" height="12.800" fill="#dfe7f5" stroke="#2b579a" stroke-width="0.900"/>
 <path d="M382.400 554 h4.400 M382.400 556.100 h4.400 M382.400 558.200 h4.400 M382.400 560.300 h4.400 M382.400 562.400 h4.400" stroke="#6f90cc" stroke-width="1"/>
 <path d="M370.900 551.400 l10.200 -1.400 v16 l-10.200 -1.400z" fill="#2b579a"/>
 <path d="M373.200 555.200 l1.400 5.800 l1.500 -5.600 l1.500 5.600 l1.400 -5.800" fill="none" stroke="#fff" stroke-width="1.100" stroke-linejoin="round"/>
 <!-- snipping -->
 <ellipse cx="418.800" cy="555" rx="8.100" ry="5.200" fill="#fff" fill-opacity="0.550" stroke="#ec6a78" stroke-width="1" transform="rotate(-17 418.800 555)"/>
 <path d="M417.600 551.200 l4.600 9 M422.600 552 l-2.600 8.400" stroke="#8a8a8a" stroke-width="1.100"/>
 <ellipse cx="421.700" cy="563.300" rx="1.700" ry="3.200" fill="none" stroke="#2f86dc" stroke-width="1.400" transform="rotate(12 421.700 563.300)"/>
 <ellipse cx="425.700" cy="560.900" rx="1.700" ry="3" fill="none" stroke="#2f86dc" stroke-width="1.400" transform="rotate(58 425.700 560.900)"/>
</svg>

<!-- screenrec badge -->
<div class="b" style="left:651.7px;top:559px;width:74.6px;height:16px;background:#1d1d1d;border-radius:3px 3px 0 0"></div>
<div class="b" style="left:654.5px;top:562.5px;width:8px;height:8px;border-radius:50%;background:#ff1a1a;box-shadow:0 0 0 1px #7a1010"></div>
<svg style="left:800px;top:542px" width="224" height="32" viewBox="800 542 224 32">
 <!-- chevron -->
 <path d="M814.600 560.200 l4.500 -4.600 l4.500 4.600" fill="none" stroke="#444" stroke-width="1.200"/>
 <!-- wifi -->
 <g fill="none" stroke="#777" stroke-width="1">
  <path d="M833.600 562.800 a9.200 9.200 0 0 1 9.200 -9.200"/>
  <path d="M836.400 562.800 a6.400 6.400 0 0 1 6.400 -6.400"/>
  <path d="M839.200 562.800 a3.600 3.600 0 0 1 3.600 -3.600"/>
 </g>
 <circle cx="842.600" cy="562.700" r="0.900" fill="#333"/>
 <!-- cloud -->
 <defs><linearGradient id="cl" x1="0" y1="0" x2="0" y2="1"><stop offset="0" stop-color="#8a8a8a"/><stop offset="0.45" stop-color="#d8d8d8"/><stop offset="1" stop-color="#f4f4f4"/></linearGradient></defs>
 <path d="M854.200 561.900 a2.800 2.800 0 0 1 -0.300 -5.600 a4 4 0 0 1 7.600 -0.900 a3.300 3.300 0 0 1 -0.400 6.500z" fill="url(#cl)" stroke="#444" stroke-width="1"/>
 <!-- meet now -->
 <rect x="873" y="555.400" width="6.200" height="5.200" fill="#f4f4f4" stroke="#555" stroke-width="0.900"/>
 <path d="M879.400 557 l2.200 -1 v4 l-2.200 -1z" fill="#f4f4f4" stroke="#555" stroke-width="0.800"/>
 <path d="M873.400 553.200 q3.600 -1.800 7.200 0 M873.400 562.800 q3.600 1.800 7.200 0" fill="none" stroke="#777" stroke-width="0.900"/>
 <!-- battery -->
 <rect x="890" y="555" width="11.400" height="6.400" fill="#fff" stroke="#333" stroke-width="0.900"/>
 <rect x="890.600" y="555.600" width="5.400" height="5.200" fill="#111"/>
 <rect x="901.800" y="557" width="1" height="2.400" fill="#333"/>
 <!-- speaker -->
 <path d="M909.200 556.200 h2.200 l3 -2.800 v9.400 l-3 -2.800 h-2.200z" fill="none" stroke="#555" stroke-width="0.900" stroke-linejoin="round"/>
 <path d="M915.800 556.400 q1.200 1.600 0 3.400 M917.400 555 q2.200 3 0 6.200 M919 553.800 q3 4.200 0 8.600" fill="none" stroke="#888" stroke-width="0.800"/>
 <!-- show-desktop divider -->
 <rect x="1018" y="556" width="0.900" height="18" fill="#bfaeb3"/>
 <!-- notification icon (black) -->
 <path d="M989.300 551.700 h8 v2.600 h-4.600 v1.600 h4 v1.400 h6 v4.100 h-13.400z" fill="#0a0a0a"/>
 <!-- 18 badge -->
 <circle cx="1002.100" cy="564.300" r="6.500" fill="#e9e0e3" stroke="#9a9a9a" stroke-width="0.900"/>
 <!-- bubble -->
 <path d="M995.200 541.300 a14.900 14.900 0 1 1 14.900 14.900 h-14.900z" fill="#fff" stroke="#5c5c5c" stroke-width="1.100"/>
 <rect x="997.600" y="550.200" width="3" height="3.300" fill="#e6e6e6"/>
 <circle cx="1010.100" cy="541.400" r="10.300" fill="none" stroke="#ea2c48" stroke-width="1.800"/>
 <path d="M1011.900 536.800 V544.900 H1009.800 V539.500 L1007.700 540.300 V538.500 L1010.300 536.800 Z" fill="#1c1c1c"/>
</svg>


<!-- text -->
<div class="t" style="left:413.50px;top:14.00px;font-size:9.8px;color:#fff;transform:scaleX(0.9718);">Document1 - Word (Product Activation Failed)</div>
<div class="t" style="left:16.70px;top:36.00px;font-size:9.7px;color:#fff;transform:scaleX(0.8512);">File</div>
<div class="t" style="left:57.50px;top:36.00px;font-size:9.7px;color:#2b579a;transform:scaleX(0.9867);">Home</div>
<div class="t" style="left:98.75px;top:36.00px;font-size:9.7px;color:#fff;transform:scaleX(0.9491);">Insert</div>
<div class="t" style="left:138.00px;top:36.00px;font-size:9.7px;color:#fff;transform:scaleX(0.9368);">Design</div>
<div class="t" style="left:182.50px;top:36.00px;font-size:9.7px;color:#fff;transform:scaleX(0.9452);">Layout</div>
<div class="t" style="left:226.00px;top:36.00px;font-size:9.7px;color:#fff;transform:scaleX(0.8880);">References</div>
<div class="t" style="left:286.00px;top:36.00px;font-size:9.7px;color:#fff;transform:scaleX(0.9705);">Mailings</div>
<div class="t" style="left:337.00px;top:36.00px;font-size:9.7px;color:#fff;transform:scaleX(0.8972);">Review</div>
<div class="t" style="left:381.00px;top:36.00px;font-size:9.7px;color:#fff;transform:scaleX(0.9122);">View</div>
<div class="t" style="left:429.00px;top:36.00px;font-size:9.7px;color:#b3c5e3;transform:scaleX(0.9912);">Tell me what you want to do...</div>
<div class="t" style="left:927.00px;top:36.00px;font-size:9.7px;color:#fff;transform:scaleX(0.9451);">Sign in</div>
<div class="t" style="left:983.40px;top:36.00px;font-size:9.7px;color:#fff;transform:scaleX(0.9126);">Share</div>
<div class="t" style="left:6.90px;top:82.00px;font-size:9.6px;color:#444;transform:scaleX(0.8677);">Paste</div>
<div class="t" style="left:49.30px;top:57.00px;font-size:9.6px;color:#adadad;transform:scaleX(0.9172);">Cut</div>
<div class="t" style="left:49.30px;top:74.00px;font-size:9.6px;color:#adadad;transform:scaleX(0.9774);">Copy</div>
<div class="t" style="left:49.30px;top:91.00px;font-size:9.6px;color:#444;transform:scaleX(0.9613);">Format Painter</div>
<div class="t" style="left:33.75px;top:108.00px;font-size:8.3px;color:#666;transform:scaleX(1.0207);">Clipboard</div>
<div class="t" style="left:194.20px;top:108.00px;font-size:8.3px;color:#666;transform:scaleX(0.9573);">Font</div>
<div class="t" style="left:353.00px;top:108.00px;font-size:8.3px;color:#666;transform:scaleX(0.9523);">Paragraph</div>
<div class="t" style="left:678.50px;top:108.00px;font-size:8.3px;color:#666;transform:scaleX(0.9206);">Styles</div>
<div class="t" style="left:950.30px;top:108.00px;font-size:8.3px;color:#666;transform:scaleX(0.9892);">Editing</div>
<div class="t" style="left:120.90px;top:62.00px;font-size:9.6px;color:#444;transform:scaleX(0.9269);">Arial</div>
<div class="t" style="left:186.90px;top:62.00px;font-size:9.6px;color:#444;transform:scaleX(0.8152);">14</div>
<div class="t" style="left:953.60px;top:55.00px;font-size:9.6px;color:#444;transform:scaleX(0.9212);">Find</div>
<div class="t" style="left:953.60px;top:72.00px;font-size:9.6px;color:#444;transform:scaleX(0.8920);">Replace</div>
<div class="t" style="left:953.60px;top:88.00px;font-size:9.6px;color:#444;transform:scaleX(0.8923);">Select</div>
<div class="t" style="left:463.00px;top:65.00px;font-size:10.5px;color:#1c1c1c;transform:scaleX(0.9404);-webkit-text-stroke:0.25px #1c1c1c;">AaBbCcDc</div>
<div class="t" style="left:468.40px;top:85.00px;font-size:9.6px;color:#5c5c5c;transform:scaleX(0.9806);">¶ Normal</div>
<div class="t" style="left:520.40px;top:65.00px;font-size:10.5px;color:#1c1c1c;transform:scaleX(0.9365);-webkit-text-stroke:0.25px #1c1c1c;">AaBbCcDc</div>
<div class="t" style="left:520.00px;top:85.00px;font-size:9.6px;color:#5c5c5c;transform:scaleX(0.9349);">¶ No Spac...</div>
<div class="t" style="left:579.30px;top:63.00px;font-size:25px;color:#111;transform:scaleX(1.0014);font-weight:700;font-family:'Liberation Serif', serif;">AaB</div>
<div class="t" style="left:580.90px;top:85.00px;font-size:9.6px;color:#5c5c5c;transform:scaleX(0.9737);">Heading 1</div>
<div class="b" style="left:634.00px;top:51.00px;width:51.00px;height:28.00px;overflow:hidden"><div class="t" style="left:2px;top:15.00px;font-size:17.5px;color:#111;transform:scaleX(1.0935);font-weight:700;font-family:'Liberation Serif', serif;">AaBbC</div></div>
<div class="t" style="left:638.30px;top:85.00px;font-size:9.6px;color:#5c5c5c;transform:scaleX(0.9646);">Heading 2</div>
<div class="b" style="left:691.10px;top:57.00px;width:50.70px;height:16.80px;overflow:hidden"><div class="t" style="left:2px;top:8.00px;font-size:10.5px;color:#6b93c7;transform:scaleX(0.9955);">AaBbCcDc</div></div>
<div class="t" style="left:695.80px;top:85.00px;font-size:9.6px;color:#5c5c5c;transform:scaleX(0.9783);">Heading 3</div>
<div class="t" style="left:751.70px;top:63.00px;font-size:23px;color:#2a2a2a;transform:scaleX(1.0188);">AaB</div>
<div class="t" style="left:767.20px;top:85.00px;font-size:9.6px;color:#5c5c5c;transform:scaleX(0.8998);">Title</div>
<div class="b" style="left:806.30px;top:57.00px;width:50.10px;height:16.48px;overflow:hidden"><div class="t" style="left:2px;top:9.00px;font-size:10.3px;color:#757575;transform:scaleX(0.8522);letter-spacing:1.2px;">AaBbCcDc</div></div>
<div class="t" style="left:816.90px;top:85.00px;font-size:9.6px;color:#5c5c5c;transform:scaleX(0.9781);">Subtitle</div>
<div class="t" style="left:866.10px;top:65.00px;font-size:10.5px;color:#5e5e5e;transform:scaleX(0.9239);font-style:italic;-webkit-text-stroke:0.2px #5e5e5e;">AaBbCcDa</div>
<div class="t" style="left:864.90px;top:85.00px;font-size:9.6px;color:#5c5c5c;transform:scaleX(0.9509);">Subtle Em...</div>
<div class="t" style="left:255.60px;top:178.00px;font-size:14.9px;color:#1a1a1a;transform:scaleX(0.9921);-webkit-text-stroke:0.3px #1a1a1a;">This are a mistake</div>
<div class="b" style="left:393.10px;top:189.00px;width:21.40px;height:10.60px;overflow:hidden"><div class="t" style="left:2px;top:8.00px;font-size:9.3px;color:#555;transform:scaleX(0.9101);">(Ctrl)</div></div>
<div class="t" style="left:293.30px;top:217.00px;font-size:10.5px;color:#ababab;transform:scaleX(0.9895);">Correct subject-verb agreement</div>
<div class="t" style="left:293.30px;top:237.00px;font-size:13px;color:#4a6ee0;transform:scaleX(0.9406);font-weight:700;">is</div>
<div class="t" style="left:313.00px;top:263.00px;font-size:12px;color:#b2b2b2;transform:scaleX(0.9619);">Dismiss</div>
<div class="t" style="left:313.00px;top:289.00px;font-size:12px;color:#b2b2b2;transform:scaleX(0.9657);">See more in Grammarly</div>
<div class="t" style="left:3.80px;top:533.00px;font-size:8.5px;color:#555;transform:scaleX(0.9199);">Page 1 of 1</div>
<div class="t" style="left:55.60px;top:533.00px;font-size:8.5px;color:#555;transform:scaleX(0.9810);">4 words</div>
<div class="t" style="left:934.50px;top:552.00px;font-size:9.7px;color:#3a3a3a;transform:scaleX(0.9563);">8:35 PM</div>
<div class="t" style="left:929.90px;top:566.00px;font-size:9.7px;color:#3a3a3a;transform:scaleX(1.0253);">8/21/2025</div>
<div class="t" style="left:667.30px;top:567.00px;font-size:13px;color:#f2f2f2;transform:scaleX(0.8608);">screen</div>
<div class="t" style="left:701.90px;top:567.00px;font-size:13px;color:#fff;transform:scaleX(0.9779);font-weight:700;">rec</div>
<div class="t" style="left:997.70px;top:564.00px;font-size:8.6px;color:#1a1a1a;transform:scaleX(0.8784);-webkit-text-stroke:0.2px #1a1a1a;">18</div>
</div></body></html>
